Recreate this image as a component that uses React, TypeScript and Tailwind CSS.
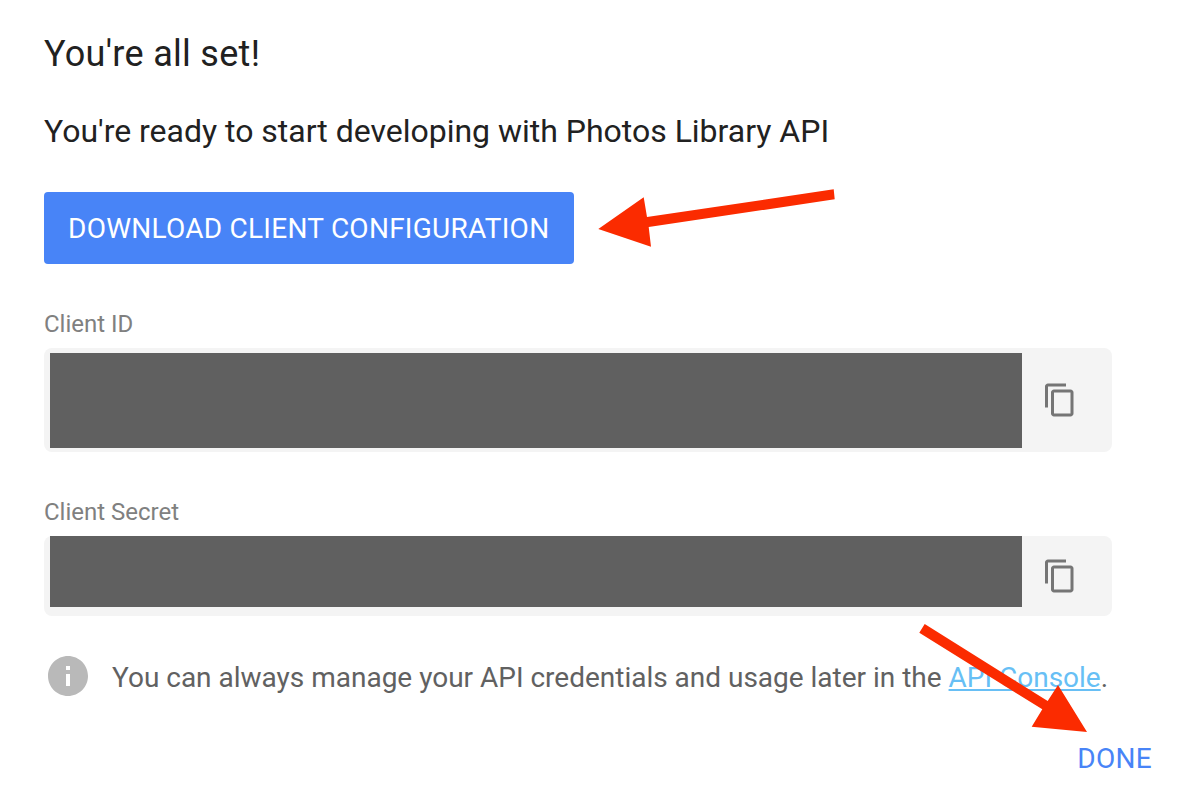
const COPY_PATH =
  "M16 1H4c-1.1 0-2 .9-2 2v14h2V3h12V1zm3 4H8c-1.1 0-2 .9-2 2v14c0 1.1.9 2 2 2h11c1.1 0 2-.9 2-2V7c0-1.1-.9-2-2-2zm0 16H8V7h11v14z";
const INFO_PATH =
  "M12 2C6.48 2 2 6.48 2 12s4.48 10 10 10 10-4.48 10-10S17.52 2 12 2zm1 15h-2v-6h2v6zm0-8h-2V7h2v2z";

function CopyButton({ label }: { label: string }) {
  return (
    <button type="button" aria-label={label} className="ml-5 size-9 shrink-0 self-center text-[#757575]">
      <svg viewBox="0 0 24 24" className="size-9" fill="currentColor">
        <path d={COPY_PATH} />
      </svg>
    </button>
  );
}

export default function App() {
  return (
    <main className="relative flex h-[806px] w-[1192px] flex-col overflow-hidden bg-white pl-11 pt-[34px] font-['Roboto',sans-serif] whitespace-nowrap text-[#212121]">
      <h1 className="text-[36px] leading-10 tracking-[0.3px]">You're all set!</h1>
      <h2 className="mt-[37px] text-[32px] leading-10 tracking-[-0.012px]">
        You're ready to start developing with Photos Library API
      </h2>

      <button
        type="button"
        className="mt-[41px] h-[72px] w-[530px] rounded bg-[#4884f7] pl-6 pt-0.5 text-left text-[28px] leading-[70px] tracking-[0.26px] text-white"
      >
        DOWNLOAD CLIENT CONFIGURATION
      </button>

      <div className="mt-11 text-[24px] leading-8 text-[#808080]">Client ID</div>
      <div className="mt-2 flex h-[104px] w-[1068px] rounded-lg bg-[#f4f4f4] pl-1.5">
        <div className="mt-[5px] h-[95px] w-[972px] bg-[#606060]" />
        <CopyButton label="Copy client ID" />
      </div>

      <div className="mt-11 text-[24px] leading-8 text-[#808080]">Client Secret</div>
      <div className="mt-2 flex h-20 w-[1068px] rounded-lg bg-[#f4f4f4] pl-1.5">
        <div className="h-[71px] w-[972px] bg-[#606060]" />
        <CopyButton label="Copy client secret" />
      </div>

      <div className="mt-9 flex h-12 items-center gap-5 text-[28px] leading-10 tracking-[-0.008px] text-[#616161]">
        <svg viewBox="0 0 24 24" className="size-12 shrink-0" fill="#b9b9b9">
          <path d={INFO_PATH} />
        </svg>
        <p className="mt-[3px]">
          You can always manage your API credentials and usage later in the{" "}
          <a className="text-[#67bff5] underline decoration-2 underline-offset-2">API Console</a>.
        </p>
      </div>

      <button
        type="button"
        className="mr-10 mt-[39px] self-end text-[28px] leading-10 tracking-[0.28px] text-[#4884f7]"
      >
        DONE
      </button>

      <svg viewBox="0 0 1192 806" className="pointer-events-none absolute inset-0 h-[806px] w-[1192px]" fill="#fb2b00">
        <path d="M598.3 229L643.7 197.3L647 217L833.7 189.3L834.7 199.3L648.7 227L651 246.7Z" />
        <path d="M924.7 624L919.3 632.7L1042.3 709.3L1031.7 726.7L1087 732L1058 685L1047.7 701Z" />
      </svg>
    </main>
  );
}
